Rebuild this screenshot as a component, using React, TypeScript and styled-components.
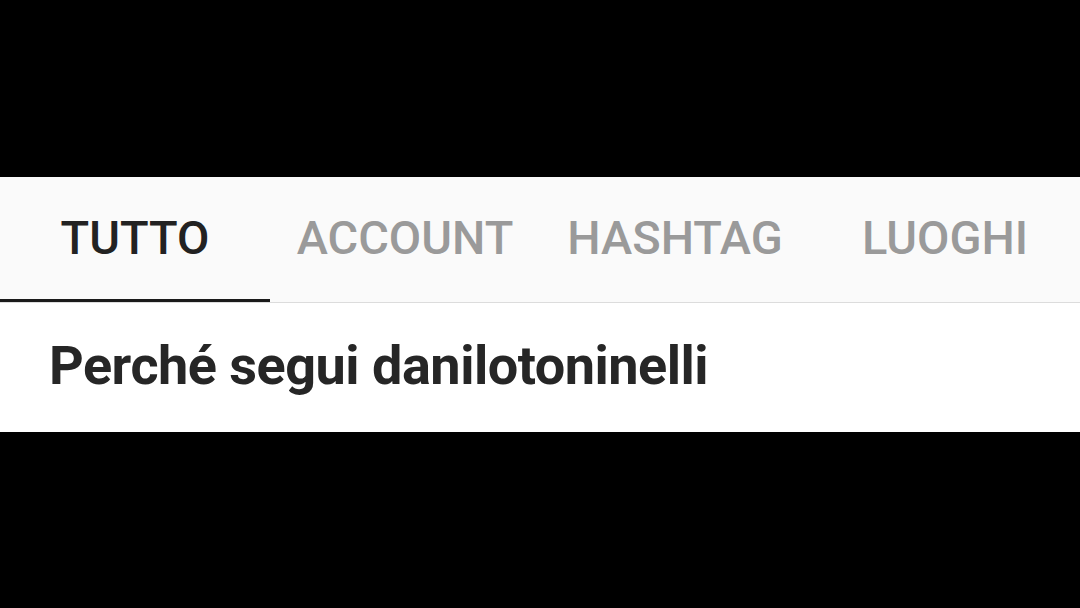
import React from "react";
import styled, { createGlobalStyle } from "styled-components";

const Global = createGlobalStyle`
  html, body { margin: 0; padding: 0; background: #000; }
  body { width: 1080px; height: 608px; overflow: hidden; font-family: Roboto, "Noto Sans", sans-serif; }
`;

const Screen = styled.div`
  width: 1080px;
  height: 608px;
  background: #000;
  display: flex;
  flex-direction: column;
  padding-top: 177px;
  box-sizing: border-box;
`;

const TabBar = styled.div`
  display: grid;
  grid-template-columns: repeat(4, 1fr);
  height: 125px;
  background: #fafafa;
  border-bottom: 1px solid #dcdcdc;
`;

const Tab = styled.div<{ $active?: boolean }>`
  display: flex;
  align-items: center;
  justify-content: center;
  font-family: Roboto, sans-serif;
  font-weight: 500;
  font-size: 47px;
  color: ${(p) => (p.$active ? "#222222" : "#9a9a9a")};
  border-bottom: 3px solid ${(p) => (p.$active ? "#1a1a1a" : "transparent")};
  padding-bottom: 2px;
  box-sizing: border-box;
`;

const Content = styled.div`
  background: #ffffff;
  height: 129px;
  display: flex;
  align-items: center;
  padding-left: 49px;
  padding-bottom: 4px;
  box-sizing: border-box;
`;

const Title = styled.h1`
  margin: 0;
  font-family: Roboto, sans-serif;
  font-weight: 700;
  font-size: 54px;
  letter-spacing: -0.5px;
  color: #262626;
  line-height: 1;
`;

export default function App() {
  return (
    <>
      <Global />
      <Screen>
        <TabBar>
          <Tab $active>TUTTO</Tab>
          <Tab>ACCOUNT</Tab>
          <Tab>HASHTAG</Tab>
          <Tab>LUOGHI</Tab>
        </TabBar>
        <Content>
          <Title>Perché segui danilotoninelli</Title>
        </Content>
      </Screen>
    </>
  );
}
